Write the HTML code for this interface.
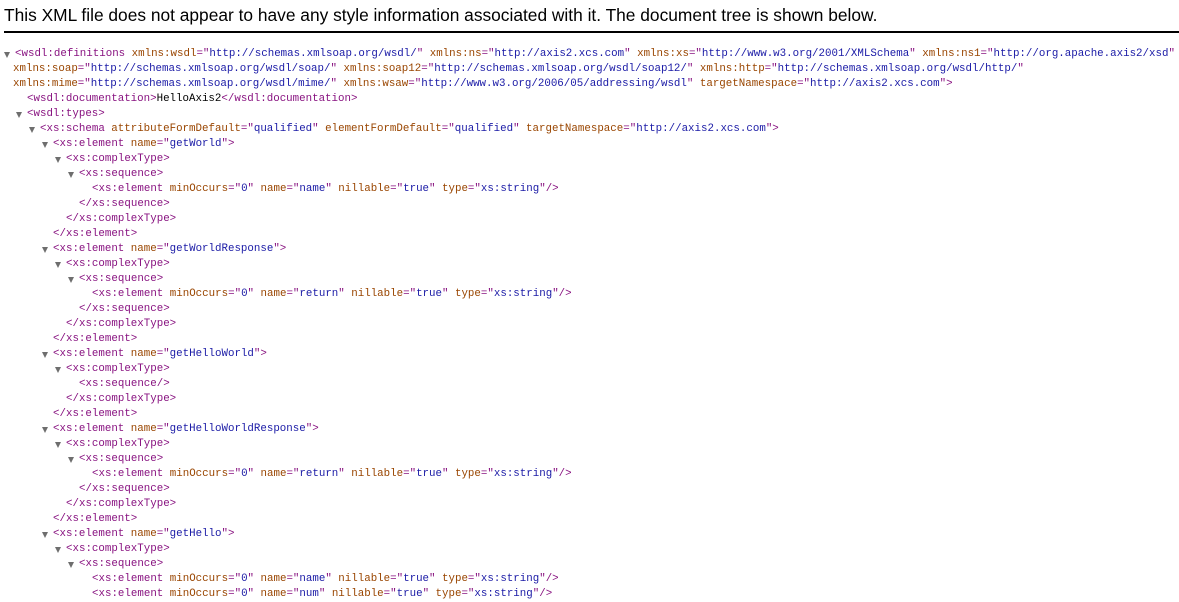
<!DOCTYPE html>
<html><head><meta charset="utf-8"><style>
body{margin:0;background:#fff;width:1179px;height:600px;overflow:hidden;position:relative}
.hdr{position:absolute;left:4px;top:5px;font-family:"Liberation Sans",sans-serif;font-size:17.35px;color:#000;white-space:nowrap}
.bar{position:absolute;left:4px;top:31px;width:1175px;height:2px;background:#000}
.t{position:absolute;top:47px;left:0;font-family:"Liberation Mono","Noto Sans CJK SC",monospace;font-size:10.8px;line-height:15px;color:#000}
.l{position:relative;height:15px;white-space:pre}
.g{color:#881280}.a{color:#994500}.v{color:#1a1aa6}
.tr{position:absolute;top:5px;width:0;height:0;border-left:3.5px solid transparent;border-right:3.5px solid transparent;border-top:6px solid #6e6e6e}
</style></head><body>
<div class="hdr">This XML file does not appear to have any style information associated with it. The document tree is shown below.</div>
<div class="bar"></div>
<div class="t"><div class="l" style="padding-left:15px"><i class="tr" style="left:4px"></i><span class="g">&lt;wsdl:definitions</span> <span class="a">xmlns:wsdl</span><span class="g">="</span><span class="v">http://schemas.xmlsoap.org/wsdl/</span><span class="g">"</span> <span class="a">xmlns:ns</span><span class="g">="</span><span class="v">http://axis2.xcs.com</span><span class="g">"</span> <span class="a">xmlns:xs</span><span class="g">="</span><span class="v">http://www.w3.org/2001/XMLSchema</span><span class="g">"</span> <span class="a">xmlns:ns1</span><span class="g">="</span><span class="v">http://org.apache.axis2/xsd</span><span class="g">"</span></div><div class="l" style="padding-left:13px"><span class="a">xmlns:soap</span><span class="g">="</span><span class="v">http://schemas.xmlsoap.org/wsdl/soap/</span><span class="g">"</span> <span class="a">xmlns:soap12</span><span class="g">="</span><span class="v">http://schemas.xmlsoap.org/wsdl/soap12/</span><span class="g">"</span> <span class="a">xmlns:http</span><span class="g">="</span><span class="v">http://schemas.xmlsoap.org/wsdl/http/</span><span class="g">"</span></div><div class="l" style="padding-left:13px"><span class="a">xmlns:mime</span><span class="g">="</span><span class="v">http://schemas.xmlsoap.org/wsdl/mime/</span><span class="g">"</span> <span class="a">xmlns:wsaw</span><span class="g">="</span><span class="v">http://www.w3.org/2006/05/addressing/wsdl</span><span class="g">"</span> <span class="a">targetNamespace</span><span class="g">="</span><span class="v">http://axis2.xcs.com</span><span class="g">"&gt;</span></div><div class="l" style="padding-left:27px"><span class="g">&lt;wsdl:documentation&gt;</span>HelloAxis2<span class="g">&lt;/wsdl:documentation&gt;</span></div><div class="l" style="padding-left:27px"><i class="tr" style="left:16px"></i><span class="g">&lt;wsdl:types&gt;</span></div><div class="l" style="padding-left:40px"><i class="tr" style="left:29px"></i><span class="g">&lt;xs:schema</span> <span class="a">attributeFormDefault</span><span class="g">="</span><span class="v">qualified</span><span class="g">"</span> <span class="a">elementFormDefault</span><span class="g">="</span><span class="v">qualified</span><span class="g">"</span> <span class="a">targetNamespace</span><span class="g">="</span><span class="v">http://axis2.xcs.com</span><span class="g">"&gt;</span></div><div class="l" style="padding-left:53px"><i class="tr" style="left:42px"></i><span class="g">&lt;xs:element</span> <span class="a">name</span><span class="g">="</span><span class="v">getWorld</span><span class="g">"&gt;</span></div><div class="l" style="padding-left:66px"><i class="tr" style="left:55px"></i><span class="g">&lt;xs:complexType&gt;</span></div><div class="l" style="padding-left:79px"><i class="tr" style="left:68px"></i><span class="g">&lt;xs:sequence&gt;</span></div><div class="l" style="padding-left:92px"><span class="g">&lt;xs:element</span> <span class="a">minOccurs</span><span class="g">="</span><span class="v">0</span><span class="g">"</span> <span class="a">name</span><span class="g">="</span><span class="v">name</span><span class="g">"</span> <span class="a">nillable</span><span class="g">="</span><span class="v">true</span><span class="g">"</span> <span class="a">type</span><span class="g">="</span><span class="v">xs:string</span><span class="g">"/&gt;</span></div><div class="l" style="padding-left:79px"><span class="g">&lt;/xs:sequence&gt;</span></div><div class="l" style="padding-left:66px"><span class="g">&lt;/xs:complexType&gt;</span></div><div class="l" style="padding-left:53px"><span class="g">&lt;/xs:element&gt;</span></div><div class="l" style="padding-left:53px"><i class="tr" style="left:42px"></i><span class="g">&lt;xs:element</span> <span class="a">name</span><span class="g">="</span><span class="v">getWorldResponse</span><span class="g">"&gt;</span></div><div class="l" style="padding-left:66px"><i class="tr" style="left:55px"></i><span class="g">&lt;xs:complexType&gt;</span></div><div class="l" style="padding-left:79px"><i class="tr" style="left:68px"></i><span class="g">&lt;xs:sequence&gt;</span></div><div class="l" style="padding-left:92px"><span class="g">&lt;xs:element</span> <span class="a">minOccurs</span><span class="g">="</span><span class="v">0</span><span class="g">"</span> <span class="a">name</span><span class="g">="</span><span class="v">return</span><span class="g">"</span> <span class="a">nillable</span><span class="g">="</span><span class="v">true</span><span class="g">"</span> <span class="a">type</span><span class="g">="</span><span class="v">xs:string</span><span class="g">"/&gt;</span></div><div class="l" style="padding-left:79px"><span class="g">&lt;/xs:sequence&gt;</span></div><div class="l" style="padding-left:66px"><span class="g">&lt;/xs:complexType&gt;</span></div><div class="l" style="padding-left:53px"><span class="g">&lt;/xs:element&gt;</span></div><div class="l" style="padding-left:53px"><i class="tr" style="left:42px"></i><span class="g">&lt;xs:element</span> <span class="a">name</span><span class="g">="</span><span class="v">getHelloWorld</span><span class="g">"&gt;</span></div><div class="l" style="padding-left:66px"><i class="tr" style="left:55px"></i><span class="g">&lt;xs:complexType&gt;</span></div><div class="l" style="padding-left:79px"><span class="g">&lt;xs:sequence/&gt;</span></div><div class="l" style="padding-left:66px"><span class="g">&lt;/xs:complexType&gt;</span></div><div class="l" style="padding-left:53px"><span class="g">&lt;/xs:element&gt;</span></div><div class="l" style="padding-left:53px"><i class="tr" style="left:42px"></i><span class="g">&lt;xs:element</span> <span class="a">name</span><span class="g">="</span><span class="v">getHelloWorldResponse</span><span class="g">"&gt;</span></div><div class="l" style="padding-left:66px"><i class="tr" style="left:55px"></i><span class="g">&lt;xs:complexType&gt;</span></div><div class="l" style="padding-left:79px"><i class="tr" style="left:68px"></i><span class="g">&lt;xs:sequence&gt;</span></div><div class="l" style="padding-left:92px"><span class="g">&lt;xs:element</span> <span class="a">minOccurs</span><span class="g">="</span><span class="v">0</span><span class="g">"</span> <span class="a">name</span><span class="g">="</span><span class="v">return</span><span class="g">"</span> <span class="a">nillable</span><span class="g">="</span><span class="v">true</span><span class="g">"</span> <span class="a">type</span><span class="g">="</span><span class="v">xs:string</span><span class="g">"/&gt;</span></div><div class="l" style="padding-left:79px"><span class="g">&lt;/xs:sequence&gt;</span></div><div class="l" style="padding-left:66px"><span class="g">&lt;/xs:complexType&gt;</span></div><div class="l" style="padding-left:53px"><span class="g">&lt;/xs:element&gt;</span></div><div class="l" style="padding-left:53px"><i class="tr" style="left:42px"></i><span class="g">&lt;xs:element</span> <span class="a">name</span><span class="g">="</span><span class="v">getHello</span><span class="g">"&gt;</span></div><div class="l" style="padding-left:66px"><i class="tr" style="left:55px"></i><span class="g">&lt;xs:complexType&gt;</span></div><div class="l" style="padding-left:79px"><i class="tr" style="left:68px"></i><span class="g">&lt;xs:sequence&gt;</span></div><div class="l" style="padding-left:92px"><span class="g">&lt;xs:element</span> <span class="a">minOccurs</span><span class="g">="</span><span class="v">0</span><span class="g">"</span> <span class="a">name</span><span class="g">="</span><span class="v">name</span><span class="g">"</span> <span class="a">nillable</span><span class="g">="</span><span class="v">true</span><span class="g">"</span> <span class="a">type</span><span class="g">="</span><span class="v">xs:string</span><span class="g">"/&gt;</span></div><div class="l" style="padding-left:92px"><span class="g">&lt;xs:element</span> <span class="a">minOccurs</span><span class="g">="</span><span class="v">0</span><span class="g">"</span> <span class="a">name</span><span class="g">="</span><span class="v">num</span><span class="g">"</span> <span class="a">nillable</span><span class="g">="</span><span class="v">true</span><span class="g">"</span> <span class="a">type</span><span class="g">="</span><span class="v">xs:string</span><span class="g">"/&gt;</span></div></div>
</body></html>
